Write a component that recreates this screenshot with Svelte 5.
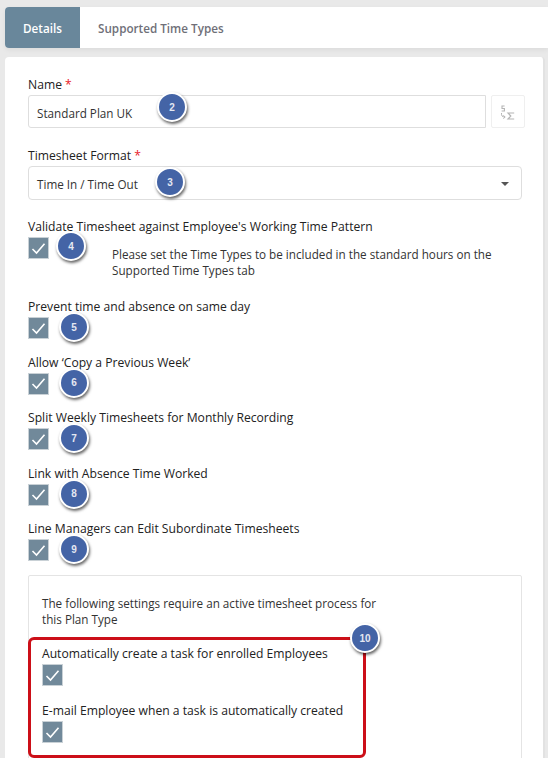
<script>
  const checks = [
    { label: 'Prevent time and absence on same day', n: 5 },
    { label: 'Allow ‘Copy a Previous Week’', n: 6 },
    { label: 'Split Weekly Timesheets for Monthly Recording', n: 7 },
    { label: 'Link with Absence Time Worked', n: 8 },
    { label: 'Line Managers can Edit Subordinate Timesheets', n: 9 }
  ]
</script>

{#snippet tick()}
  <span class="check">
    <svg width="15" height="13" viewBox="0 0 15 13"><path d="M1.5 7 L5.5 11 L13.5 1.8" fill="none" stroke="#fff" stroke-width="1.6" /></svg>
  </span>
{/snippet}

<div class="page">
  <nav class="tabs">
    <div class="tab active">Details</div>
    <div class="tab">Supported Time Types</div>
  </nav>

  <main class="card">
    <div class="field name">
      <label>Name <span class="req">*</span></label>
      <div class="row">
        <div class="input">Standard Plan UK</div>
        <div class="sumBtn">
          <svg width="16" height="16" viewBox="0 0 16 16" fill="none" stroke="#b4b4b4">
            <path d="M4.6 2 H2 V4.5 H4.4 V7 H1.6" stroke-width="1.1" />
            <path d="M1.5 9 C1.2 11.5 2.2 13 4.5 13 M3.4 11.4 L5.2 13 L3.4 14.6" stroke-width="1" />
            <path d="M14.2 9 H8 L10.8 12 L8 15 H14.2" stroke-width="1.2" />
          </svg>
        </div>
      </div>
      <span class="badge" style="left:129px;top:15px">2</span>
    </div>

    <div class="field format">
      <label>Timesheet Format <span class="req">*</span></label>
      <div class="input select">Time In / Time Out<span class="caret"></span></div>
      <span class="badge" style="left:127px;top:19px">3</span>
    </div>

    <div class="field validate">
      <label>Validate Timesheet against Employee's Working Time Pattern</label>
      {@render tick()}
      <p class="hint">Please set the Time Types to be included in the standard hours on the Supported Time Types tab</p>
      <span class="badge" style="left:28px;top:12px">4</span>
    </div>

    {#each checks as c}
      <div class="field flag">
        <label>{c.label}</label>
        {@render tick()}
        <span class="badge" style="left:31px;top:13px">{c.n}</span>
      </div>
    {/each}

    <section class="process">
      <p class="note">The following settings require an active timesheet process for this Plan Type</p>
      <div class="tasks">
        <div class="task">
          <label>Automatically create a task for enrolled Employees</label>
          {@render tick()}
        </div>
        <div class="task">
          <label>E-mail Employee when a task is automatically created</label>
          {@render tick()}
        </div>
        <span class="badge" style="left:319px;top:-17px">10</span>
      </div>
    </section>
  </main>
</div>

<style>
  :global(body) {
    background: #fff;
  }
  .page {
    width: 548px;
    height: 758px;
    box-sizing: border-box;
    padding: 7px 0 0 5px;
    background: #e9e9e9;
    overflow: hidden;
    font-family: "Open Sans", sans-serif;
    font-size: 11.7px;
    line-height: 16px;
    color: #333;
  }
  .tabs {
    display: flex;
    height: 41px;
    background: #fff;
    box-shadow: 0 2px 5px rgba(0, 0, 0, 0.06);
    border-radius: 4px 0 0 4px;
  }
  .tab {
    display: flex;
    align-items: center;
    padding: 0 18px;
    font-weight: 600;
    color: #6f6f78;
  }
  .tab.active {
    width: 75px;
    box-sizing: border-box;
    justify-content: center;
    padding: 0;
    background: #69879b;
    color: #fff;
    border-radius: 4px 0 0 4px;
  }
  .card {
    box-sizing: border-box;
    width: 540px;
    height: 720px;
    margin-top: 9px;
    padding: 20px 23px 0 23px;
    background: #fff;
    border-right: 2px solid #e2e2e2;
    border-radius: 4px 4px 0 0;
  }
  label {
    display: block;
    font-size: 12.15px;
    color: #222;
  }
  .req {
    color: #e8202a;
  }
  .field {
    position: relative;
  }
  .row {
    display: flex;
    gap: 5px;
    margin-top: 2px;
  }
  .input {
    flex: none;
    box-sizing: border-box;
    width: 458px;
    height: 33px;
    padding: 9px 8px 0;
    border: 1px solid #dedede;
    border-radius: 3px 0 0 3px;
  }
  .sumBtn {
    flex: none;
    width: 34px;
    height: 33px;
    box-sizing: border-box;
    display: flex;
    align-items: center;
    justify-content: center;
    border: 1px solid #efefef;
    border-radius: 2px;
  }
  .format {
    margin-top: 20px;
  }
  .select {
    position: relative;
    width: 494px;
    height: 34px;
    margin-top: 2px;
    border-radius: 4px;
  }
  .caret {
    position: absolute;
    right: 12px;
    top: 15px;
    border-left: 4.5px solid transparent;
    border-right: 4.5px solid transparent;
    border-top: 4.5px solid #555;
  }
  .validate {
    margin-top: 19px;
    height: 72px;
  }
  .check {
    display: flex;
    align-items: center;
    justify-content: center;
    box-sizing: border-box;
    width: 21px;
    height: 22px;
    margin-top: 2px;
    background: #71899a;
    border: 1px solid #c9d1d6;
  }
  .hint {
    margin: -13px 0 0 84px;
  }
  .flag {
    height: 40px;
    margin-top: 15.5px;
  }
  .validate + .flag {
    margin-top: 8px;
  }
  .process {
    box-sizing: border-box;
    width: 494px;
    height: 200px;
    margin-top: 14px;
    padding: 19px 13px 0;
    border: 1px solid #e4e4e4;
    border-radius: 2px;
  }
  .note {
    width: 340px;
    margin: 0;
  }
  .tasks {
    position: relative;
    box-sizing: border-box;
    width: 338px;
    height: 121px;
    margin: 10px 0 0 -14px;
    padding: 6px 0 0 11px;
    border: 3px solid #cc0f18;
    border-radius: 6px;
  }
  .task + .task {
    margin-top: 17px;
  }
  .badge {
    position: absolute;
    width: 26px;
    height: 26px;
    border-radius: 50%;
    display: flex;
    align-items: center;
    justify-content: center;
    background: #4464a6;
    border: 2px solid #fff;
    box-shadow: 1px 2px 3px rgba(0, 0, 0, 0.6);
    color: #e4e8f2;
    font: bold 10px "Liberation Sans", sans-serif;
  }
</style>
